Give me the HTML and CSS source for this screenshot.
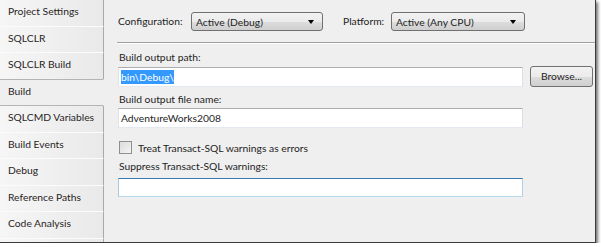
FILE: index.html
```html
<!DOCTYPE html>
<html lang="en">
<head>
    <meta charset="UTF-8">
    <title>Build Properties</title>
    <link rel="stylesheet" href="styles.css">
</head>
<body>
    <div class="window">
        <div class="tabs">
            <div class="tab">Project Settings</div>
            <div class="tab">SQLCLR</div>
            <div class="tab">SQLCLR Build</div>
            <div class="tab active">Build</div>
            <div class="tab">SQLCMD Variables</div>
            <div class="tab">Build Events</div>
            <div class="tab">Debug</div>
            <div class="tab">Reference Paths</div>
            <div class="tab">Code Analysis</div>
            <div class="tab-rest"></div>
        </div>

        <div class="page">
            <div class="config-row">
                <span class="label label-config">Configuration:</span>
                <div class="combo combo-config">Active (Debug)<span class="arrow"></span></div>
                <span class="label label-platform">Platform:</span>
                <div class="combo combo-platform">Active (Any CPU)<span class="arrow"></span></div>
            </div>
            <div class="rule"></div>

            <div class="field-label">Build output path:</div>
            <div class="path-row">
                <div class="textbox"><span class="selected">bin\Debug\</span></div>
                <div class="button">Browse...</div>
            </div>

            <div class="field-label">Build output file name:</div>
            <div class="textbox">AdventureWorks2008</div>

            <div class="check-row">
                <span class="checkbox"></span>
                <span>Treat Transact-SQL warnings as errors</span>
            </div>

            <div class="field-label">Suppress Transact-SQL warnings:</div>
            <div class="textbox focused"></div>
        </div>
    </div>
</body>
</html>
```

FILE: styles.css
```css
body {
    margin: 0;
    padding: 0;
    background-color: #fff;
    font-family: Lato, "Open Sans", sans-serif;
    font-size: 10.3px;
    color: #1e1e1e;
}
.window {
    display: flex;
    width: 596px;
    height: 243px;
    box-sizing: border-box;
    border-right: 1px solid #3a3a3a;
    border-bottom: 1px solid #3a3a3a;
    background-color: #efefef;
    box-shadow: 2px 2px 3px rgba(0, 0, 0, 0.55);
}
.tabs {
    width: 104px;
    display: flex;
    flex-direction: column;
}
.tab {
    height: 26.5px;
    line-height: 23px;
    padding-left: 8px;
    box-sizing: border-box;
    white-space: nowrap;
    overflow: hidden;
    background: linear-gradient(to right, #f6f6f6, #e9e9e9);
    border-bottom: 1px solid #fbfbfb;
    border-right: 1px solid #a9a9a9;
    color: #2a1e1e;
}
.tab.active {
    background: #efefef;
    border-right-color: #efefef;
    border-top: 1px solid #b4b4b4;
    border-bottom: 1px solid #b4b4b4;
    margin-top: -1px;
    height: 27.5px;
}
.tab-rest {
    flex: 1;
    background: linear-gradient(to right, #f6f6f6, #e9e9e9);
    border-right: 1px solid #a9a9a9;
}
.page {
    flex: 1;
    padding: 11px 0 0 14px;
}
.config-row {
    display: flex;
    align-items: center;
    height: 20px;
}
.label-config {
    width: 73px;
}
.label-platform {
    width: 48px;
    margin-left: 20px;
}
.combo {
    position: relative;
    height: 19px;
    line-height: 18px;
    box-sizing: border-box;
    padding-left: 4px;
    border: 1px solid #707070;
    border-radius: 3px;
    background: linear-gradient(to bottom, #f2f2f2, #ebebeb 50%, #dddddd 51%, #cfcfcf);
}
.combo-config {
    width: 132px;
}
.combo-platform {
    width: 134px;
}
.arrow {
    position: absolute;
    right: 8px;
    top: 7px;
    border-left: 3px solid transparent;
    border-right: 3px solid transparent;
    border-top: 4px solid #000;
}
.rule {
    height: 1px;
    background-color: #a0a0a0;
    border-bottom: 1px solid #fff;
    margin: 11px 0 5px -1px;
}
.field-label {
    height: 17px;
    line-height: 17px;
    margin-left: 1px;
}
.path-row {
    display: flex;
    align-items: center;
    margin-bottom: 4px;
}
.textbox {
    width: 405px;
    height: 20px;
    line-height: 18px;
    box-sizing: border-box;
    padding-left: 2px;
    background-color: #fff;
    border: 1px solid #abadb3;
    border-color: #abadb3 #dbdfe6 #e3e9ef #e2e3ea;
}
.textbox.focused {
    border-color: #3d7bad #b5cfe7 #b7d9ed #a4c9e3;
    height: 19px;
    margin-top: 3px;
}
.selected {
    background-color: #3399ff;
    color: #fff;
    padding: 1px 0;
}
.button {
    width: 63px;
    height: 21px;
    line-height: 19px;
    box-sizing: border-box;
    text-align: center;
    margin-left: 7px;
    border: 1px solid #707070;
    border-radius: 3px;
    background: linear-gradient(to bottom, #f2f2f2, #ebebeb 50%, #dddddd 51%, #cfcfcf);
}
.check-row {
    display: flex;
    align-items: center;
    height: 17px;
    margin: 11px 0 2px 1px;
}
.checkbox {
    width: 11px;
    height: 11px;
    border: 1px solid #8e8f8f;
    background: linear-gradient(135deg, #dcdcdc, #f4f4f4);
    margin-right: 6px;
}
```
